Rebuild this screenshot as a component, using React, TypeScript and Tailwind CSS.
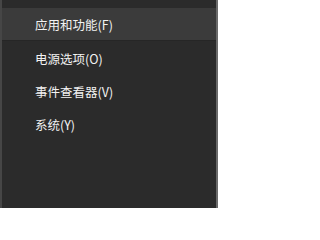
const items = ["应用和功能(F)", "电源选项(O)", "事件查看器(V)", "系统(Y)"];

export default function App() {
  return (
    <div
      className="w-[218px] h-[208px] bg-[#2b2b2b] border-l-2 border-l-[#464646] border-r-2 border-r-[#6a6a6a] pt-[8px] text-[12.5px] text-[#f2f2f2]"
      style={{ fontFamily: '"Noto Sans CJK SC", "Liberation Sans", sans-serif' }}
    >
      {items.map((label, i) => (
        <div
          key={label}
          className={
            i === 0
              ? "h-[33px] flex items-center pt-[3px] pl-[33px] bg-[#3b3b3b] border-b border-b-[#262626]"
              : "h-[33px] flex items-center pt-[3px] pl-[33px]"
          }
        >
          {label}
        </div>
      ))}
    </div>
  );
}
